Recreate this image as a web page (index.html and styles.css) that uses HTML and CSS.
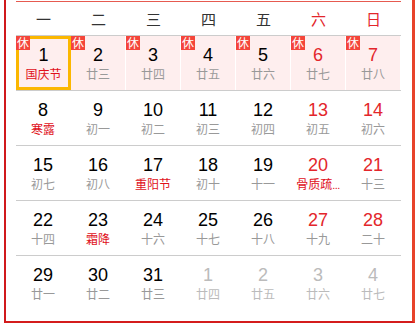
FILE: index.html
```html
<!DOCTYPE html>
<html lang="zh">
<head>
<meta charset="utf-8">
<link rel="stylesheet" href="styles.css">
</head>
<body>
<div class="frame">
  <div class="cal">
    <div class="head">
      <div>一</div><div>二</div><div>三</div><div>四</div><div>五</div><div class="we">六</div><div class="we">日</div>
    </div>
    <div class="row">
      <div class="cell rest sel"><span class="badge">休</span><span class="num">1</span><span class="lun fest">国庆节</span></div>
      <div class="cell rest"><span class="badge">休</span><span class="num">2</span><span class="lun">廿三</span></div>
      <div class="cell rest"><span class="badge">休</span><span class="num">3</span><span class="lun">廿四</span></div>
      <div class="cell rest"><span class="badge">休</span><span class="num">4</span><span class="lun">廿五</span></div>
      <div class="cell rest"><span class="badge">休</span><span class="num">5</span><span class="lun">廿六</span></div>
      <div class="cell rest we"><span class="badge">休</span><span class="num">6</span><span class="lun">廿七</span></div>
      <div class="cell rest we"><span class="badge">休</span><span class="num">7</span><span class="lun">廿八</span></div>
    </div>
    <div class="row">
      <div class="cell"><span class="num">8</span><span class="lun fest">寒露</span></div>
      <div class="cell"><span class="num">9</span><span class="lun">初一</span></div>
      <div class="cell"><span class="num">10</span><span class="lun">初二</span></div>
      <div class="cell"><span class="num">11</span><span class="lun">初三</span></div>
      <div class="cell"><span class="num">12</span><span class="lun">初四</span></div>
      <div class="cell we"><span class="num">13</span><span class="lun">初五</span></div>
      <div class="cell we"><span class="num">14</span><span class="lun">初六</span></div>
    </div>
    <div class="row">
      <div class="cell"><span class="num">15</span><span class="lun">初七</span></div>
      <div class="cell"><span class="num">16</span><span class="lun">初八</span></div>
      <div class="cell"><span class="num">17</span><span class="lun fest">重阳节</span></div>
      <div class="cell"><span class="num">18</span><span class="lun">初十</span></div>
      <div class="cell"><span class="num">19</span><span class="lun">十一</span></div>
      <div class="cell we"><span class="num">20</span><span class="lun fest">骨质疏<span class="dots">...</span></span></div>
      <div class="cell we"><span class="num">21</span><span class="lun">十三</span></div>
    </div>
    <div class="row">
      <div class="cell"><span class="num">22</span><span class="lun">十四</span></div>
      <div class="cell"><span class="num">23</span><span class="lun fest">霜降</span></div>
      <div class="cell"><span class="num">24</span><span class="lun">十六</span></div>
      <div class="cell"><span class="num">25</span><span class="lun">十七</span></div>
      <div class="cell"><span class="num">26</span><span class="lun">十八</span></div>
      <div class="cell we"><span class="num">27</span><span class="lun">十九</span></div>
      <div class="cell we"><span class="num">28</span><span class="lun">二十</span></div>
    </div>
    <div class="row last">
      <div class="cell"><span class="num">29</span><span class="lun">廿一</span></div>
      <div class="cell"><span class="num">30</span><span class="lun">廿二</span></div>
      <div class="cell"><span class="num">31</span><span class="lun">廿三</span></div>
      <div class="cell other"><span class="num">1</span><span class="lun">廿四</span></div>
      <div class="cell other"><span class="num">2</span><span class="lun">廿五</span></div>
      <div class="cell other"><span class="num">3</span><span class="lun">廿六</span></div>
      <div class="cell other"><span class="num">4</span><span class="lun">廿七</span></div>
    </div>
  </div>
</div>
</body>
</html>
```
FILE: styles.css
```css
html, body {
  margin: 0;
  padding: 0;
  background: #fff;
}
body {
  font-family: "Liberation Sans", Arial, "Noto Sans CJK SC", sans-serif;
}
.frame {
  margin-left: 4px;
  width: 385px;
  height: 320px;
  border-left: 2px solid #d0191c;
  border-right: 3px solid #e8432a;
  border-bottom: 2px solid #d41c1c;
  padding: 1px 11px 0 10px;
  box-sizing: content-box;
}
.cal {
  width: 385px;
  border-top: 1px solid #e65a50;
}
.head {
  display: grid;
  grid-template-columns: repeat(7, 55px);
  height: 33px;
  border-bottom: 1px solid #ccc;
}
.head div {
  display: flex;
  align-items: center;
  justify-content: center;
  font-family: "Noto Sans CJK SC", sans-serif;
  font-size: 15px;
  color: #333;
}
.head div.we {
  color: #e3262b;
}
.row {
  display: grid;
  grid-template-columns: repeat(7, 55px);
  height: 54px;
  border-bottom: 1px solid #ccc;
}
.row.last {
  border-bottom: none;
}
.cell {
  position: relative;
  margin-right: 1px;
  display: flex;
  flex-direction: column;
  align-items: center;
  box-sizing: border-box;
  padding-top: 9px;
}
.cell.rest {
  background: #feeeee;
}
.cell.sel {
  border: 3px solid #fbb700;
  padding-top: 6px;
  width: 55px;
  margin-right: 0;
}
.num {
  font-family: "Liberation Sans", Arial, sans-serif;
  font-size: 18px;
  line-height: 20px;
  color: #000;
}
.lun {
  font-family: "Noto Sans CJK SC", sans-serif;
  font-size: 12px;
  line-height: 16px;
  margin-top: 1px;
  color: #999;
  white-space: nowrap;
}
.lun.fest {
  color: #e0101a;
}
.dots {
  font-family: "Liberation Sans", Arial, sans-serif;
  font-size: 11px;
  letter-spacing: -0.5px;
}
.cell.we .num {
  color: #e3262b;
}
.cell.other .num,
.cell.other .lun {
  color: #bbb;
}
.badge {
  position: absolute;
  left: 0;
  top: 0;
  width: 14px;
  height: 14px;
  background: #f4453a;
  color: #fff;
  font-family: "Noto Sans CJK SC", sans-serif;
  font-size: 12px;
  line-height: 14px;
  text-align: center;
}
.sel .badge {
  left: -3px;
  top: -3px;
}
```
